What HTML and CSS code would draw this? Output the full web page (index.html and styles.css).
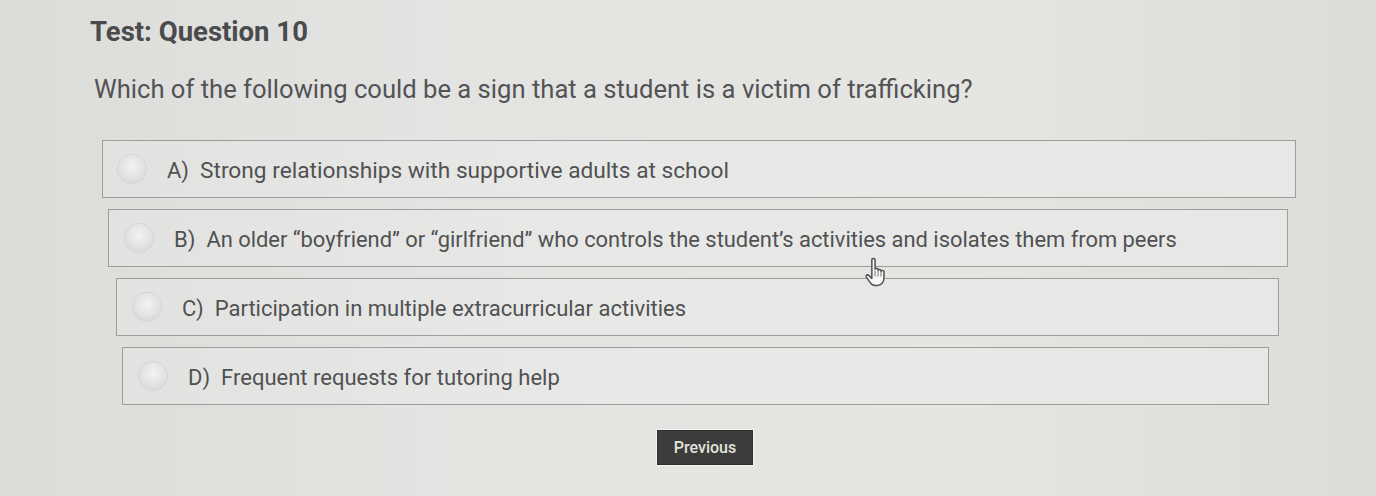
FILE: index.html
```html
<!DOCTYPE html>
<html>
<head>
<meta charset="utf-8">
<link rel="stylesheet" href="styles.css">
</head>
<body>
<div class="page">
  <h1 class="title">Test: Question 10</h1>
  <p class="question">Which of the following could be a sign that a student is a victim of trafficking?</p>
  <div class="options">
    <div class="option opt-a"><span class="radio"></span><span class="label">A)</span><span class="text">Strong relationships with supportive adults at school</span></div>
    <div class="option opt-b"><span class="radio"></span><span class="label">B)</span><span class="text">An older “boyfriend” or “girlfriend” who controls the student’s activities and isolates them from peers</span>
      <svg class="cursor" width="28" height="32" viewBox="0 0 24 28"><path d="M7.5 2.2c0-1.3 2.8-1.3 2.8 0v8.6c0-1.2 2.6-1.2 2.6 0v1c0-1.2 2.6-1.2 2.6 0v0.8c0-1.2 2.6-1.2 2.6 0v5.8c0 3.6-2.4 6.6-6 6.6h-1.4c-2.2 0-3.6-1-4.8-2.8L2.6 17.6c-0.8-1.3 1-2.6 2.2-1.5l2.7 2.6z" fill="#f7f7f5" stroke="#505050" stroke-width="1.3" stroke-linejoin="round"/><path d="M10.3 12v5M12.9 12.5v4.5M15.5 13.2v3.8" stroke="#777" stroke-width="0.9" fill="none"/></svg>
    </div>
    <div class="option opt-c"><span class="radio"></span><span class="label">C)</span><span class="text">Participation in multiple extracurricular activities</span></div>
    <div class="option opt-d"><span class="radio"></span><span class="label">D)</span><span class="text">Frequent requests for tutoring help</span></div>
  </div>
  <div class="actions"><button class="btn-prev">Previous</button></div>
</div>
</body>
</html>
```
FILE: styles.css
```css
html, body {
  margin: 0;
  padding: 0;
}
body {
  width: 1376px;
  height: 496px;
  overflow: hidden;
  background: linear-gradient(90deg, #dcdcd9 0%, #e3e3e1 30%, #e5e5e2 70%, #dddcd8 100%);
  font-family: Roboto, "Noto Sans", "Liberation Sans", sans-serif;
  color: #4f5052;
}
.page {
  padding: 12px 0 0 90px;
}
.title {
  margin: 0;
  font-size: 27.5px;
  font-weight: 700;
  line-height: 40px;
  color: #4a4b4d;
}
.question {
  margin: 22px 0 0 4px;
  font-size: 25.6px;
  line-height: 30px;
  color: #525355;
}
.options {
  margin-top: 36px;
  display: flex;
  flex-direction: column;
  gap: 11px;
}
.option {
  position: relative;
  display: flex;
  align-items: center;
  box-sizing: border-box;
  height: 58px;
  border: 1.5px solid #9c9d9c;
  background: linear-gradient(90deg, #e2e3e0 0%, #e8e9e6 40%, #e7e8e5 100%);
  font-size: 22px;
  color: #505153;
}
.opt-a { margin-left: 12px; width: 1194px; padding-left: 15px; }
.opt-a .text { font-size: 22.7px; }
.opt-b { margin-left: 18px; width: 1180px; padding-left: 16px; }
.opt-b .text { font-size: 21.9px; }
.opt-c { margin-left: 26px; width: 1163px; padding-left: 16px; }
.opt-d { margin-left: 32px; width: 1147px; padding-left: 16px; }
.text, .label { position: relative; top: 1px; }
.radio {
  width: 28px;
  height: 28px;
  border-radius: 50%;
  background: radial-gradient(circle at 50% 40%, #f3f3f1 0%, #e2e2e0 55%, #cfcfcd 100%);
  box-shadow: 0 0 0 1px #d4d4d2;
  margin-right: 21px;
  flex: none;
}
.label {
  margin-right: 11px;
}
.cursor {
  position: absolute;
  left: 754px;
  top: 47px;
  z-index: 2;
}
.actions {
  display: flex;
  justify-content: center;
  margin-top: 25px;
  padding-right: 90px;
}
.btn-prev {
  margin-left: 34px;
  width: 96px;
  height: 35px;
  background: #3b3c3b;
  color: #e2e4dc;
  border: 1px solid #2d2d2d;
  font-family: Roboto, "Noto Sans", sans-serif;
  font-size: 16px;
  font-weight: 500;
  padding: 0;
  box-shadow: 0 0 0 1px #f4f4f2;
}
```
